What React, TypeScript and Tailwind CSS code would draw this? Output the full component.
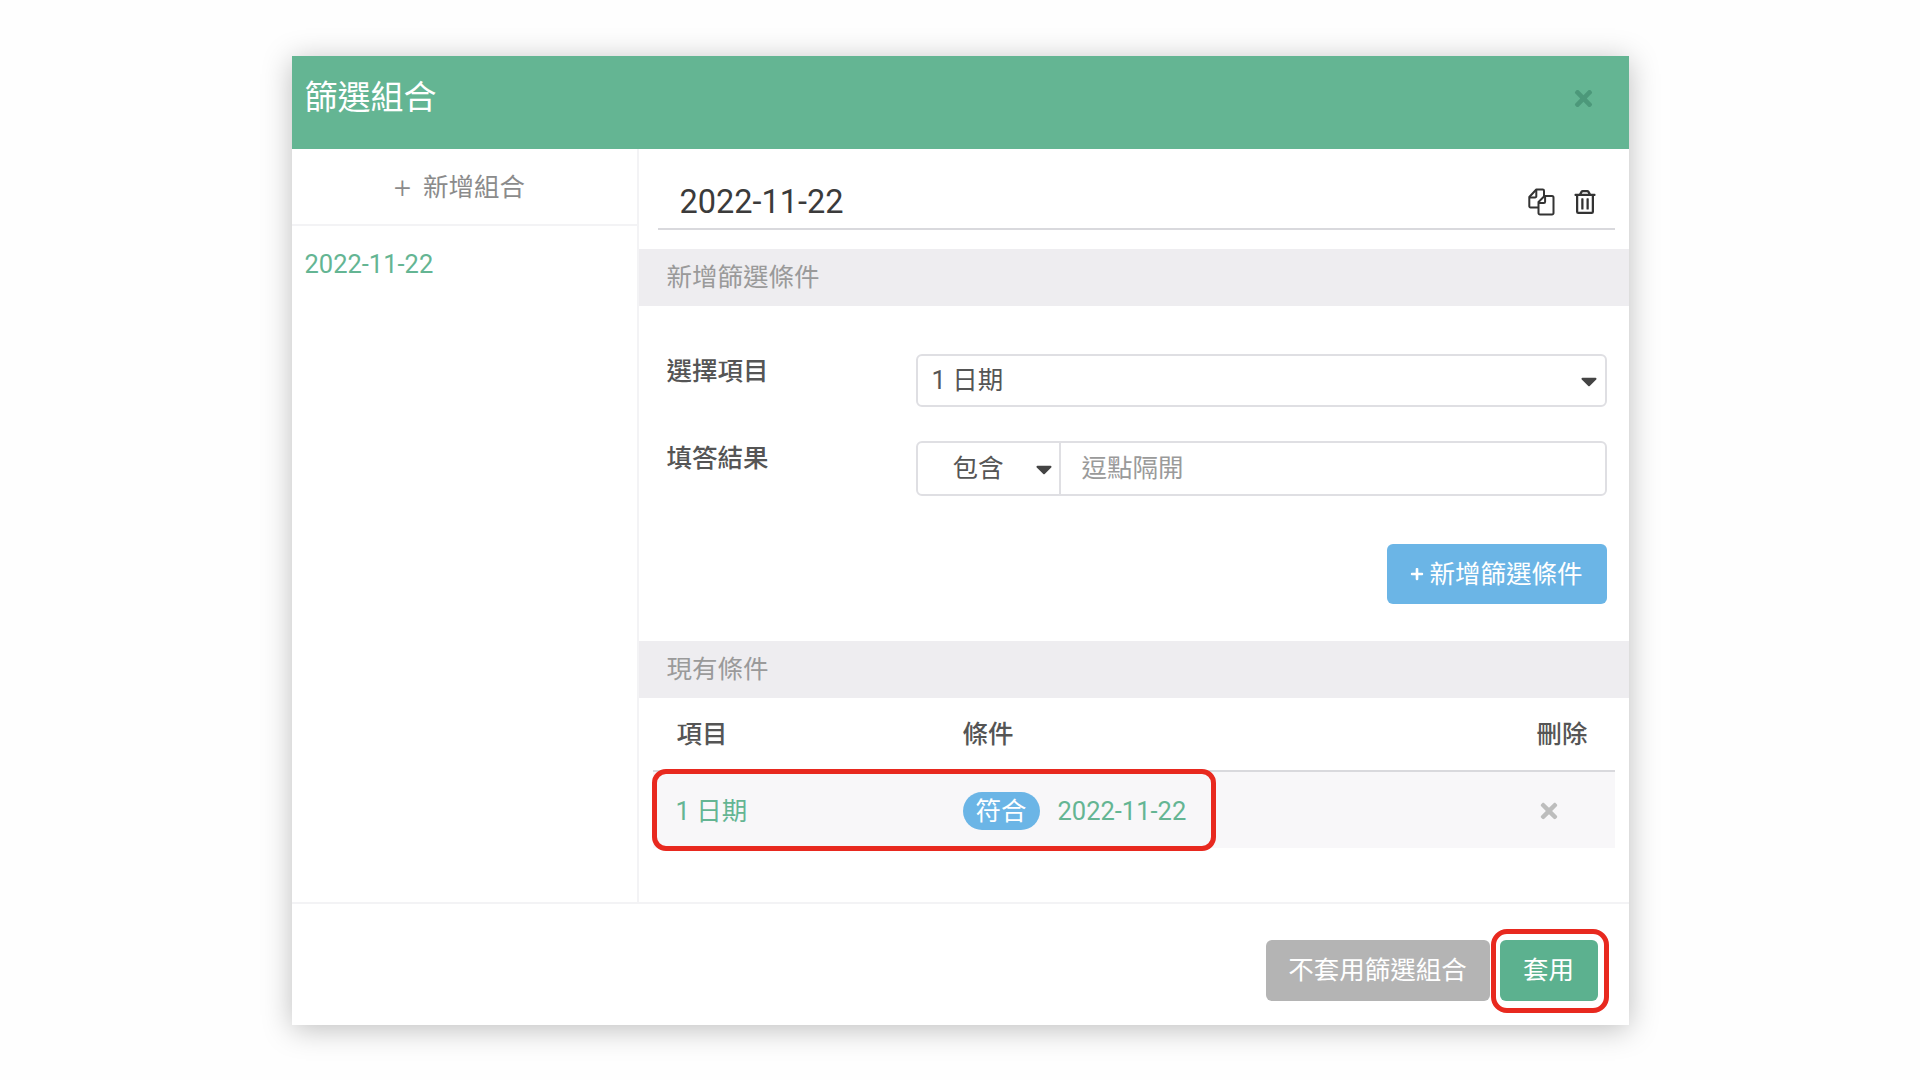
import React from 'react';
import { FaTimes, FaRegTrashAlt, FaCaretDown, FaPlus } from 'react-icons/fa';

const FilesIcon = () => (
  <svg width="27" height="28" viewBox="0 0 27 28" fill="none" stroke="#333" strokeWidth="2" strokeLinejoin="round">
    <path d="M10 19.5H2.5a1.2 1.2 0 0 1-1.2-1.2V9l7-7.5h6.5a1.2 1.2 0 0 1 1.2 1.2V8" />
    <path d="M1.5 9.5h5.5a1.3 1.3 0 0 0 1.3-1.3V2" />
    <path d="M10.5 16V14l6-6h7.5a1.5 1.5 0 0 1 1.5 1.5v15.5a1.5 1.5 0 0 1-1.5 1.5H12a1.5 1.5 0 0 1-1.5-1.5z" fill="#fff" />
    <path d="M10.8 15h5a1.3 1.3 0 0 0 1.3-1.3V8.3" />
  </svg>
);

const SectionBar = ({ title }: { title: string }) => (
  <div className="flex h-[57px] items-center bg-[#eeedf0] pl-[28px] text-[25.5px] text-[#9a9a9a]">{title}</div>
);

const App: React.FC = () => {
  return (
    <div className="flex h-[1080px] w-full justify-center overflow-hidden bg-[#fefefe] pt-[56px] font-['Roboto','Noto_Sans_CJK_TC',sans-serif]">
      <div className="flex h-[969px] w-[1337px] flex-col bg-white shadow-[0_4px_28px_rgba(0,0,0,0.26)]">
        <div className="flex h-[93px] shrink-0 items-center justify-between bg-[#64b593] pb-[9px] pl-[13px] pr-[33px]">
          <h1 className="text-[33px] font-normal text-white">篩選組合</h1>
          <FaTimes className="text-[#4c987a]" size={25} />
        </div>

        <div className="flex h-[755px] shrink-0 border-b-2 border-[#f3f3f5]">
          <div className="w-[347px] shrink-0 border-r-2 border-[#f3f3f5]">
            <div className="flex h-[77px] items-center justify-center gap-[12px] border-b-2 border-[#f3f3f5] pr-[9px] pt-[2px] text-[25.5px] text-[#8b8b8b]">
              <span className="text-[30px] font-light">+</span>
              <span>新增組合</span>
            </div>
            <div className="pl-[13px] pt-[19px] text-[25.5px] text-[#64b593]">2022-11-22</div>
          </div>

          <div className="min-w-0 flex-1">
            <div className="ml-[19px] mr-[14px] flex h-[81px] items-center justify-between border-b-2 border-[#d9d9dd] pl-[22px] pr-[18px] pt-[27px]">
              <span className="text-[32.5px] text-[#3b3b3b]">2022-11-22</span>
              <div className="flex items-center gap-[18px]">
                <FilesIcon />
                <FaRegTrashAlt className="text-[#333]" size={24} />
              </div>
            </div>

            <div className="mt-[19px]">
              <SectionBar title="新增篩選條件" />
            </div>

            <div className="pl-[28px] pr-[22px] pt-[48px]">
              <div className="flex">
                <div className="w-[249px] shrink-0 text-[25.5px] font-medium leading-[34px] text-[#555]">選擇項目</div>
                <div className="flex h-[53px] flex-1 items-center justify-between rounded-[6px] border-2 border-[#dfdfe3] pl-[14px] pr-[3px] text-[25.5px] text-[#555]">
                  <span>1 日期</span>
                  <FaCaretDown className="text-[#444]" size={26} />
                </div>
              </div>

              <div className="mt-[34px] flex">
                <div className="w-[249px] shrink-0 text-[25.5px] font-medium leading-[34px] text-[#555]">填答結果</div>
                <div className="flex h-[55px] flex-1 items-stretch rounded-[6px] border-2 border-[#dfdfe3] text-[25.5px]">
                  <div className="flex w-[143px] shrink-0 items-center justify-between border-r-2 border-[#dfdfe3] pl-[35px] pr-[2px] text-[#555]">
                    <span>包含</span>
                    <FaCaretDown className="text-[#444]" size={26} />
                  </div>
                  <input readOnly placeholder="逗點隔開" className="min-w-0 flex-1 bg-transparent pl-[21px] outline-none placeholder:text-[#9a9a9a]" />
                </div>
              </div>

              <div className="mt-[48px] flex justify-end">
                <button className="flex h-[60px] w-[220px] items-center justify-center gap-[5px] rounded-[6px] bg-[#6bb5e6] text-[25.5px] text-white">
                  <FaPlus size={14} />
                  新增篩選條件
                </button>
              </div>
            </div>

            <div className="mt-[37px]">
              <SectionBar title="現有條件" />
            </div>

            <div className="ml-[14px] mr-[14px]">
              <div className="flex h-[74px] items-center border-b-2 border-[#d9d9dd] pl-[24px] pr-[27px] pt-[1px] text-[25.5px] font-medium text-[#555]">
                <span className="w-[285px] shrink-0">項目</span>
                <span className="ml-[1px]">條件</span>
                <span className="ml-auto">刪除</span>
              </div>
              <div className="relative flex h-[76px] items-center bg-[#f8f7f9] pl-[23px] pr-[54px] pt-[2px] text-[25.5px] text-[#64b593]">
                <span className="w-[287px] shrink-0">1 日期</span>
                <span className="flex h-[38px] w-[77px] items-center justify-center rounded-full bg-[#6bb5e6] text-white">符合</span>
                <span className="ml-[18px]">2022-11-22</span>
                <FaTimes className="ml-auto text-[#bdbdbd]" size={24} />
                <div className="absolute -top-[3px] bottom-[-3px] -left-[1px] w-[564px] rounded-[14px] border-[5px] border-[#e8291f]" />
              </div>
            </div>
          </div>
        </div>

        <div className="flex flex-1 items-start justify-end gap-[10px] pr-[31px] pt-[36px]">
          <button className="flex h-[61px] w-[224px] items-center justify-center rounded-[6px] bg-[#b4b4b4] text-[25.5px] text-white">不套用篩選組合</button>
          <div className="relative">
            <button className="flex h-[61px] w-[98px] items-center justify-center rounded-[6px] bg-[#5cb18f] text-[25.5px] text-white">套用</button>
            <div className="absolute -bottom-[12px] -left-[9px] -right-[11px] -top-[11px] rounded-[16px] border-[5px] border-[#e8291f]" />
          </div>
        </div>
      </div>
    </div>
  );
};

export default App;
